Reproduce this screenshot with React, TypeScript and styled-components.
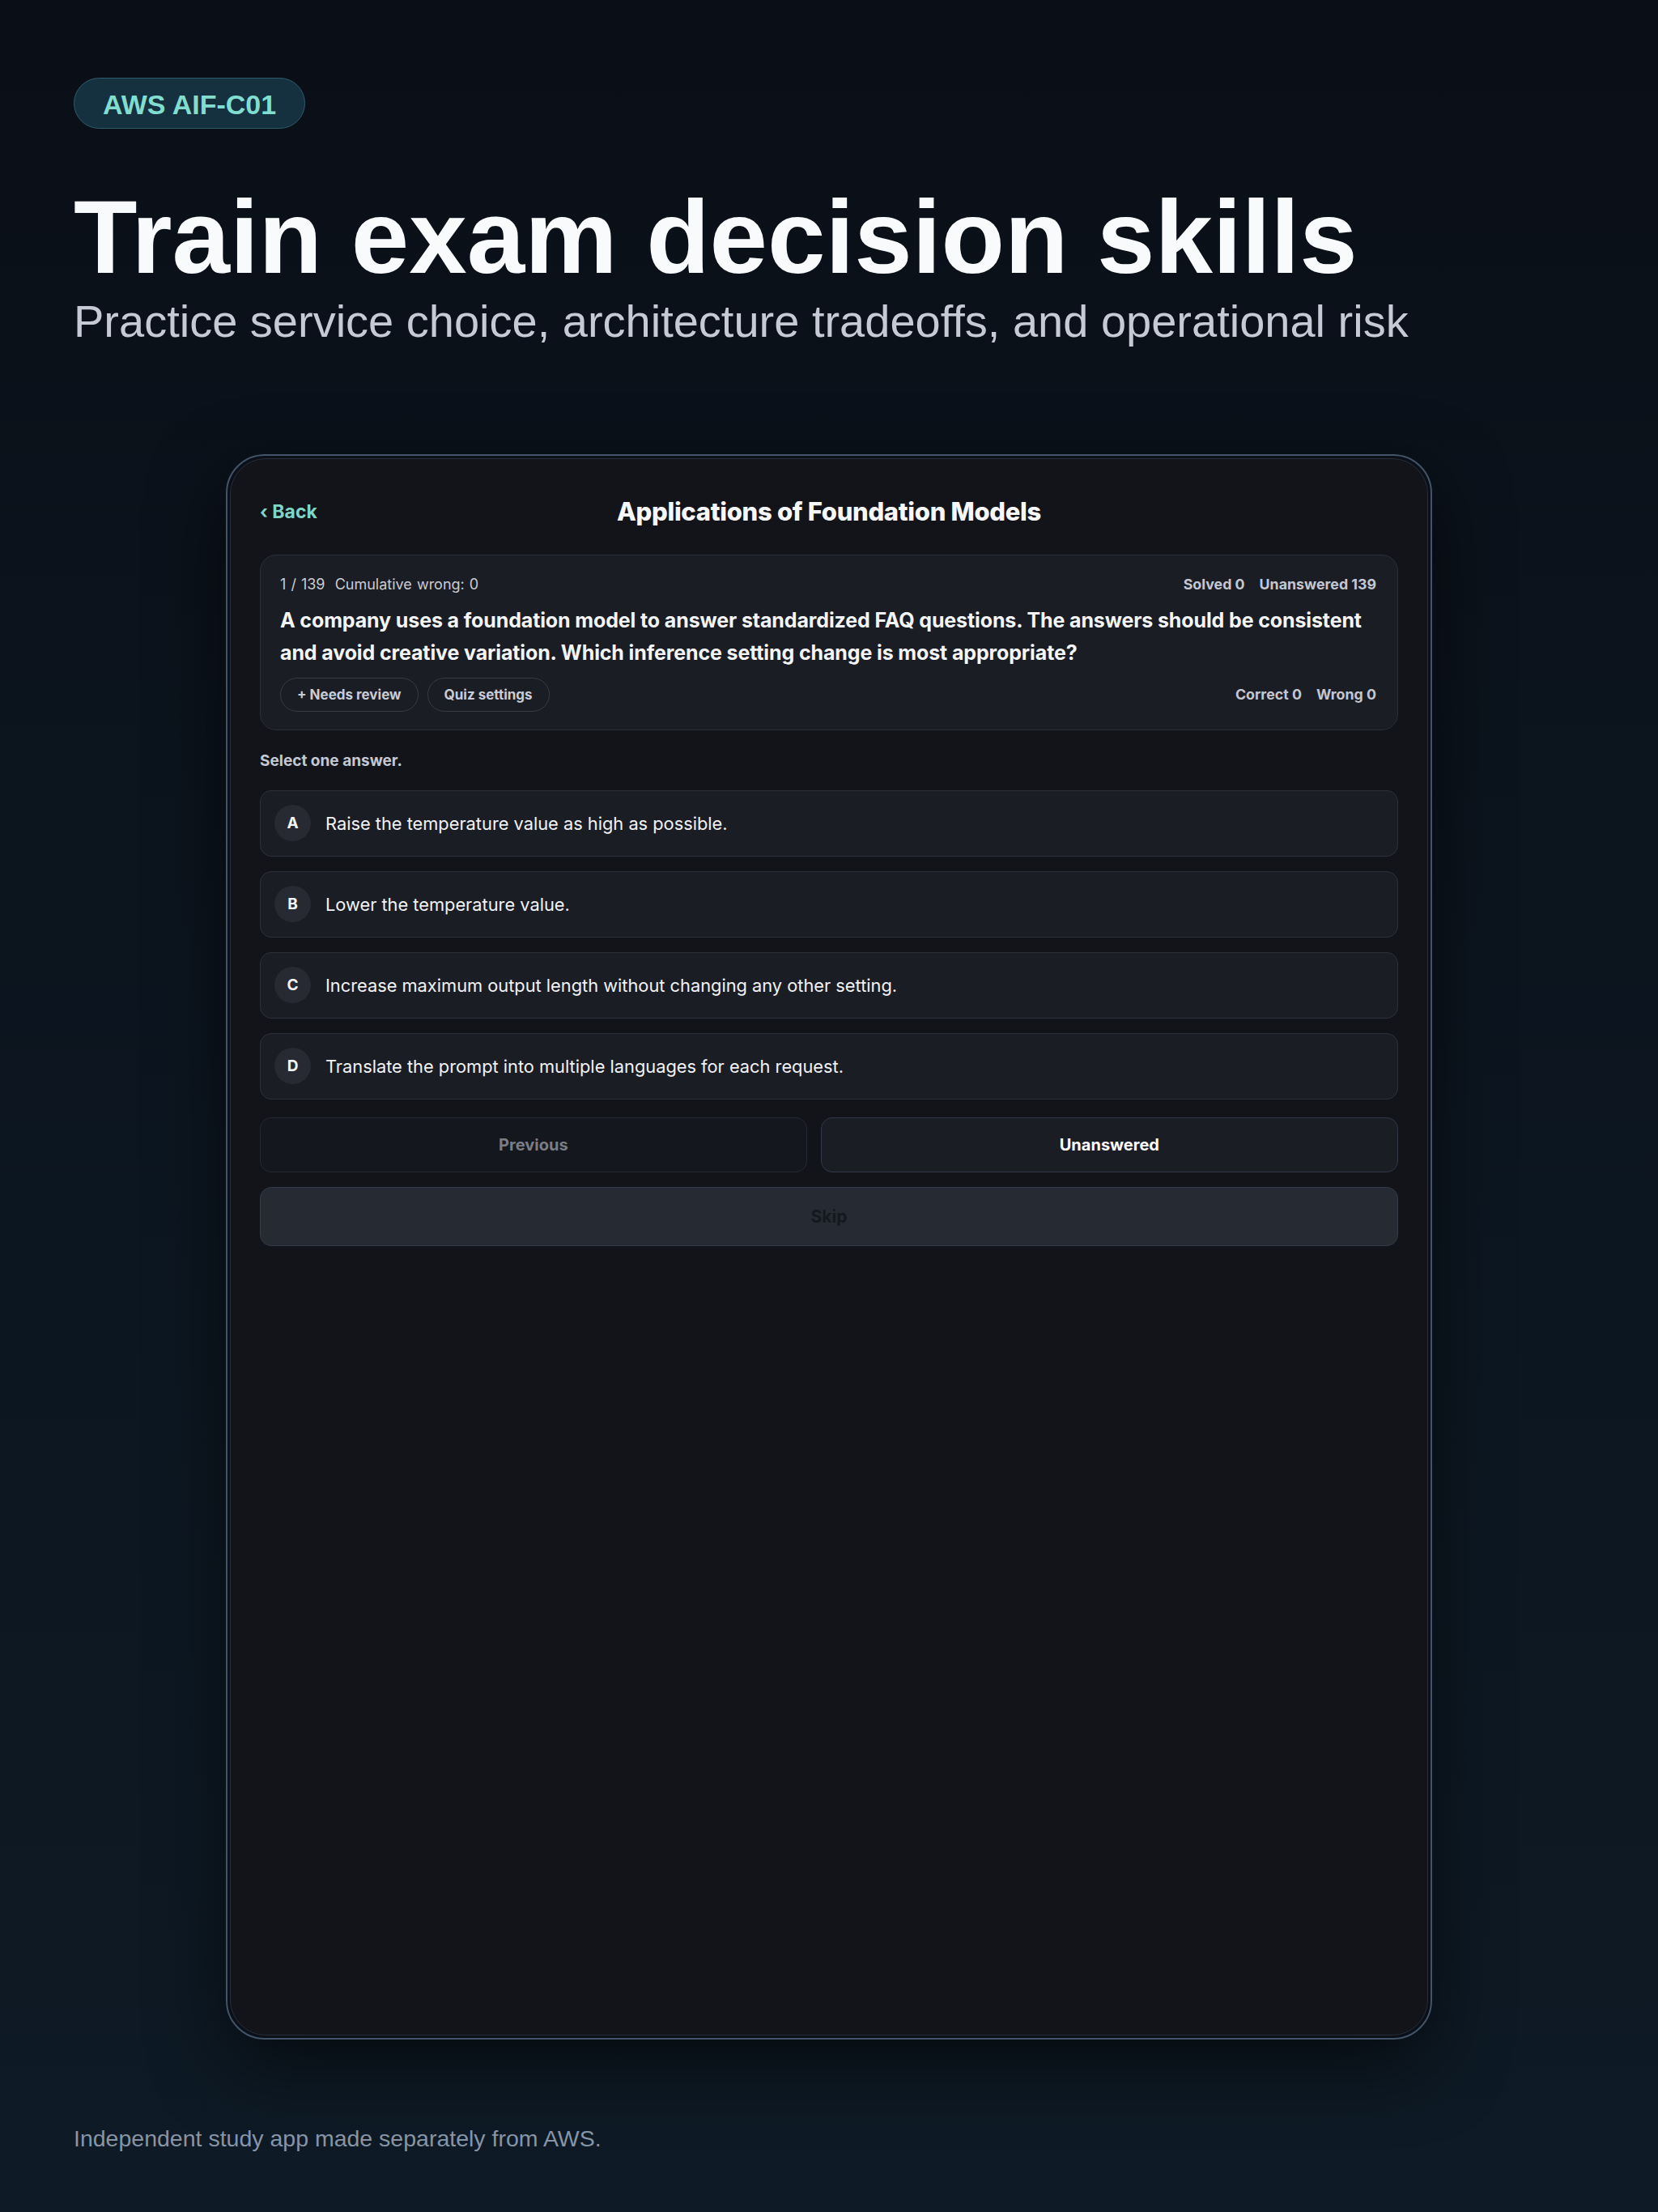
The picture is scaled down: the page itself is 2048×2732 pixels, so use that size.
import React from "react";
import styled, { createGlobalStyle } from "styled-components";

const GlobalStyle = createGlobalStyle`
  html, body {
    margin: 0;
    padding: 0;
  }
  body {
    background: linear-gradient(180deg, #0a0f17 0%, #0c1620 55%, #0e1a25 100%);
    min-height: 100vh;
    font-family: "Liberation Sans", Arial, sans-serif;
  }
  * { box-sizing: border-box; }
`;

const Page = styled.main`
  min-height: 2732px;
  padding: 96px 91px 0;
  display: flex;
  flex-direction: column;
`;

const Badge = styled.div`
  align-self: flex-start;
  height: 63px;
  padding: 3px 35px 0;
  display: inline-flex;
  align-items: center;
  border-radius: 999px;
  background: #15303f;
  border: 1px solid #2f5c6c;
  color: #80ddd0;
  font-size: 34px;
  font-weight: 700;
`;

const Heading = styled.h1`
  margin: 70px 0 0;
  font-size: 128.5px;
  line-height: 1;
  font-weight: 700;
  color: #f8fafc;
`;

const Subtitle = styled.p`
  margin: 5px 0 0;
  font-size: 56px;
  line-height: 1.2;
  color: #c5cad6;
`;

const Frame = styled.div`
  margin: 131px auto 0;
  width: 1490px;
  height: 1958px;
  border: 2px solid #41546a;
  border-radius: 48px;
  padding: 3px;
  background: #0b1018;
  box-shadow: 0 30px 90px rgba(0, 0, 0, 0.55);
  display: flex;
`;

const Screen = styled.div`
  flex: 1;
  border: 1px solid #252e3b;
  border-radius: 44px;
  background: #131419;
  padding: 43px 36px;
  font-family: Inter, "Noto Sans", sans-serif;
  display: flex;
  flex-direction: column;
`;

const Header = styled.header`
  height: 44px;
  display: grid;
  grid-template-columns: 1fr auto 1fr;
  align-items: center;
`;

const BackLink = styled.span`
  color: #7fd6c6;
  font-size: 23px;
  font-weight: 700;
  justify-self: start;
`;

const Title = styled.h2`
  margin: 0;
  color: #f6f7f9;
  font-size: 31px;
  font-weight: 800;
  letter-spacing: -0.01em;
`;

const Card = styled.section`
  margin-top: 31px;
  background: #1b1d25;
  border: 1px solid #2a2f3a;
  border-radius: 20px;
  padding: 24px 26px 22px 24px;
`;

const MetaRow = styled.div`
  display: flex;
  justify-content: space-between;
  align-items: center;
  height: 24px;
`;

const Progress = styled.span`
  color: #c9ccd3;
  font-size: 18px;
  word-spacing: 1px;
  white-space: pre;
`;

const Stats = styled.div`
  display: flex;
  gap: 18px;
  color: #c3c7d1;
  font-size: 17.8px;
  font-weight: 700;
`;

const Question = styled.p`
  margin: 12px 0 0;
  color: #f4f5f8;
  font-size: 25px;
  line-height: 40px;
  font-weight: 700;
  letter-spacing: -0.005em;
`;

const ActionRow = styled.div`
  margin-top: 11px;
  display: flex;
  align-items: center;
  justify-content: space-between;
`;

const Chips = styled.div`
  display: flex;
  gap: 11px;
`;

const Chip = styled.span`
  height: 42px;
  padding: 0 20px;
  display: inline-flex;
  align-items: center;
  border-radius: 999px;
  border: 1px solid #363a46;
  color: #c8ccd6;
  font-size: 17px;
  font-weight: 700;
`;

const Hint = styled.div`
  margin-top: 26px;
  color: #c4c8d2;
  font-size: 19px;
  font-weight: 700;
  line-height: 24px;
`;

const Options = styled.div`
  margin-top: 24px;
  display: flex;
  flex-direction: column;
  gap: 18px;
`;

const Option = styled.button`
  height: 82px;
  padding: 0 17px;
  display: flex;
  align-items: center;
  gap: 18px;
  background: #1b1d25;
  border: 1px solid #2b303b;
  border-radius: 14px;
  font-family: inherit;
  text-align: left;
  cursor: pointer;
`;

const Letter = styled.span`
  width: 45px;
  height: 45px;
  flex: none;
  border-radius: 50%;
  background: #272a33;
  color: #f4f5f8;
  font-size: 19px;
  font-weight: 700;
  display: flex;
  align-items: center;
  justify-content: center;
`;

const OptionText = styled.span`
  color: #f1f2f5;
  font-size: 21.8px;
`;

const NavRow = styled.div`
  margin-top: 22px;
  display: flex;
  gap: 17px;
`;

const NavButton = styled.button<{ $tone: "muted" | "main" }>`
  flex: 1 1 auto;
  height: 68px;
  padding: 0 20px;
  border-radius: 14px;
  font-family: inherit;
  font-size: 20px;
  font-weight: 700;
  background: ${(p) => (p.$tone === "main" ? "#1b1d25" : "#15171e")};
  border: 1px solid ${(p) => (p.$tone === "main" ? "#313746" : "#252833")};
  color: ${(p) => (p.$tone === "main" ? "#ffffff" : "#7a7d85")};
`;

const SkipButton = styled.button`
  margin-top: 18px;
  height: 73px;
  border-radius: 14px;
  font-family: inherit;
  font-size: 21px;
  font-weight: 700;
  background: #262a33;
  border: 1px solid #343b48;
  color: #141821;
`;

const Footer = styled.p`
  margin: 105px 0 0;
  font-size: 28.5px;
  line-height: 1.2;
  color: #8694a6;
`;

const answers = [
  { key: "A", text: "Raise the temperature value as high as possible." },
  { key: "B", text: "Lower the temperature value." },
  { key: "C", text: "Increase maximum output length without changing any other setting." },
  { key: "D", text: "Translate the prompt into multiple languages for each request." },
];

export default function App() {
  return (
    <>
      <GlobalStyle />
      <Page>
        <Badge>AWS AIF-C01</Badge>
        <Heading>Train exam decision skills</Heading>
        <Subtitle>Practice service choice, architecture tradeoffs, and operational risk</Subtitle>

        <Frame>
          <Screen>
            <Header>
              <BackLink>‹ Back</BackLink>
              <Title>Applications of Foundation Models</Title>
              <span />
            </Header>

            <Card>
              <MetaRow>
                <Progress>1 / 139  Cumulative wrong: 0</Progress>
                <Stats>
                  <span>Solved 0</span>
                  <span>Unanswered 139</span>
                </Stats>
              </MetaRow>
              <Question>
                A company uses a foundation model to answer standardized FAQ questions. The answers should be
                consistent and avoid creative variation. Which inference setting change is most appropriate?
              </Question>
              <ActionRow>
                <Chips>
                  <Chip>+ Needs review</Chip>
                  <Chip>Quiz settings</Chip>
                </Chips>
                <Stats>
                  <span>Correct 0</span>
                  <span>Wrong 0</span>
                </Stats>
              </ActionRow>
            </Card>

            <Hint>Select one answer.</Hint>
            <Options>
              {answers.map((a) => (
                <Option key={a.key}>
                  <Letter>{a.key}</Letter>
                  <OptionText>{a.text}</OptionText>
                </Option>
              ))}
            </Options>

            <NavRow>
              <NavButton $tone="muted">Previous</NavButton>
              <NavButton $tone="main">Unanswered</NavButton>
            </NavRow>
            <SkipButton>Skip</SkipButton>
          </Screen>
        </Frame>

        <Footer>Independent study app made separately from AWS.</Footer>
      </Page>
    </>
  );
}
